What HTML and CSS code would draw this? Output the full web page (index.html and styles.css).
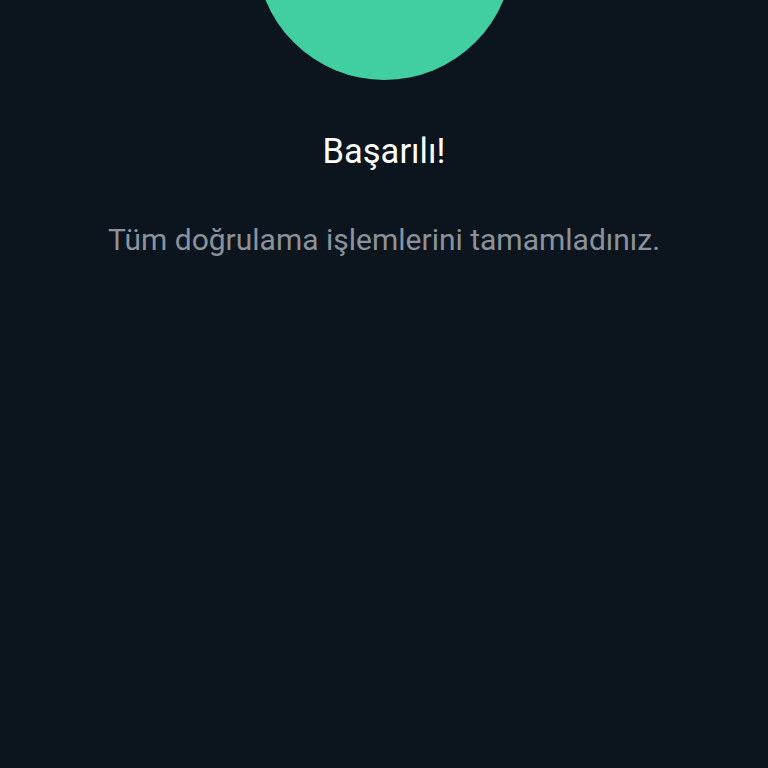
FILE: index.html
```html
<!DOCTYPE html>
<html lang="tr">
  <head>
    <meta charset="UTF-8">
    <meta name="viewport" content="width=device-width, initial-scale=1.0">
    <title>Başarılı</title>
    <link rel="stylesheet" href="styles.css">
  </head>
  <body>
    <div class="success">
      <div class="success-circle"></div>
      <h2 class="success-title">Başarılı!</h2>
      <p class="success-text">Tüm doğrulama işlemlerini tamamladınız.</p>
    </div>
  </body>
</html>
```

FILE: styles.css
```css
html, body {
  margin: 0;
  height: 100%;
}
body {
  background: #0c151e;
  font-family: Roboto, "Noto Sans", sans-serif;
  overflow: hidden;
}
.success {
  display: flex;
  flex-direction: column;
  align-items: center;
}
.success-circle {
  width: 257px;
  height: 257px;
  border-radius: 50%;
  background: #41cfa1;
  margin-top: -177px;
}
.success-title {
  margin: 51px 0 0;
  font-size: 34.5px;
  font-weight: 400;
  line-height: 40px;
  color: #ffffff;
}
.success-text {
  margin: 51px 0 0;
  font-size: 30px;
  line-height: 36px;
  color: #8b929b;
}
```
